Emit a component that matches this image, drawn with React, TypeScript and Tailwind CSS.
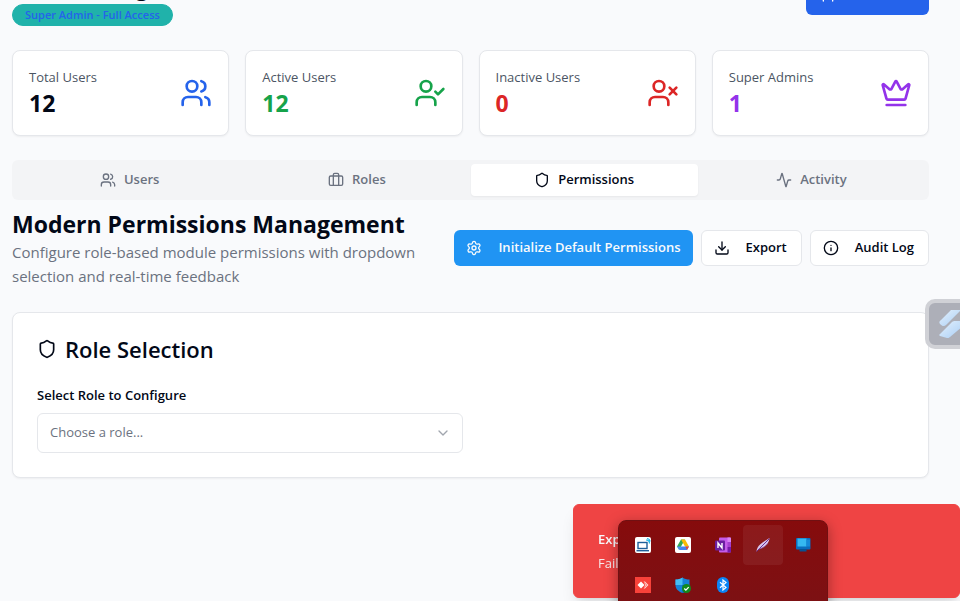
import {
  Activity,
  Briefcase,
  ChevronDown,
  Crown,
  Download,
  Info,
  Settings,
  Shield,
  UserCheck,
  UserPlus,
  Users,
  UserX,
} from "lucide-react";
import type { LucideIcon } from "lucide-react";
import type { ReactNode } from "react";

type Stat = { label: string; value: number; icon: LucideIcon; color: string };

const stats: Stat[] = [
  { label: "Total Users", value: 12, icon: Users, color: "text-[#2563eb]" },
  { label: "Active Users", value: 12, icon: UserCheck, color: "text-[#16a34a]" },
  { label: "Inactive Users", value: 0, icon: UserX, color: "text-[#dc2626]" },
  { label: "Super Admins", value: 1, icon: Crown, color: "text-[#9333ea]" },
];

const tabs: { label: string; icon: LucideIcon }[] = [
  { label: "Users", icon: Users },
  { label: "Roles", icon: Briefcase },
  { label: "Permissions", icon: Shield },
  { label: "Activity", icon: Activity },
];

function StatCard({ label, value, icon: Icon, color }: Stat) {
  return (
    <div className="flex items-center justify-between rounded-lg border border-[#e5e7eb] bg-white p-4 shadow-xs">
      <div>
        <p className="text-[13px] leading-5 text-[#4b5563]">{label}</p>
        <p className={`text-[23px] leading-8 font-bold ${label === "Total Users" ? "text-[#020817]" : color}`}>{value}</p>
      </div>
      <Icon className={`size-8 ${color}`} />
    </div>
  );
}

function OutlineButton({ icon: Icon, children }: { icon: LucideIcon; children: ReactNode }) {
  return (
    <button className="flex h-9 min-w-[100px] items-center gap-4 rounded-md border border-[#e5e7eb] bg-white pr-3.5 pl-3 text-[13px] font-semibold whitespace-nowrap">
      <Icon className="size-4" />
      {children}
    </button>
  );
}

function TrayIcons() {
  const items: { name: string; art: ReactNode }[] = [
    {
      name: "Remote display",
      art: (
        <>
          <rect width="16" height="16" rx="2" fill="#fff" />
          <rect x="3" y="5.5" width="9" height="6" fill="none" stroke="#1f5f99" strokeWidth="1.4" />
          <path d="M1.5 13.7h12.5" stroke="#1f5f99" strokeWidth="1.4" />
          <path d="M11 3c2 0 3.500 1.500 3.500 3.500M12 1.500c2 .3 3 1.500 3 3" fill="none" stroke="#19b5e8" strokeWidth="1.200" />
        </>
      ),
    },
    {
      name: "Drive",
      art: (
        <>
          <rect width="16" height="16" rx="2" fill="#fff" />
          <path d="M6 2.500h4L8 6 4.300 12.500 2 9.500z" fill="#34a853" />
          <path d="M6 2.500h4L14 9.500h-4z" fill="#fbbc04" />
          <path d="M5.700 9.500H14L12 13H4z" fill="#4285f4" />
          <path d="M10.500 9.500H14L12 13z" fill="#ea4335" />
          <path d="M2 9.500h3.700L4 13z" fill="#4f8df5" />
        </>
      ),
    },
    {
      name: "Notes",
      art: (
        <>
          <rect x="4" y="0.500" width="12" height="15" rx="1" fill="#c45be8" />
          <path d="M12.500 .5H15a1 1 0 0 1 1 1V5h-3.500z" fill="#d982f2" />
          <path d="M12.500 5H16v5h-3.500z" fill="#a640cf" />
          <path d="M12.500 10H16v4.500a1 1 0 0 1-1 1h-2.500z" fill="#7719aa" />
          <rect x="0" y="3.500" width="10" height="10" rx="1" fill="#6b1fa0" />
          <path d="M3 11V6l4 5V6" fill="none" stroke="#fff" strokeWidth="1.400" />
        </>
      ),
    },
    {
      name: "Feather",
      art: (
        <>
          <path d="M1.500 14.500C2 8.500 7 5.500 14.500 1c-.3 5-4 9-10.500 11z" fill="#d9c6ec" />
          <path d="M1.500 14.500 14.500 1.500" stroke="#6d3199" strokeWidth="1" />
          <path d="M4 12c4-1 7-3 9-6" fill="none" stroke="#8a5bb0" strokeWidth=".7" />
        </>
      ),
    },
    {
      name: "Desktop",
      art: (
        <>
          <rect x="1" y="1" width="14.500" height="11.500" rx="1" fill="#0a6cbd" />
          <rect x="2.500" y="1.500" width="9" height="8" fill="#35b8f1" />
          <path d="M11.500 2.500h3.500v7h-3.500z" fill="#1488d8" />
          <path d="M4.500 12h7v2.500h-7z" fill="#075393" />
        </>
      ),
    },
    {
      name: "Remote control",
      art: (
        <>
          <rect width="16" height="16" fill="#f8423a" />
          <path d="M6 4.500 9.500 8 6 11.500 2.500 8z" fill="#fff" />
          <path d="M8.500 4.500h1.500L13.500 8 10 11.500H8.500L12 8z" fill="#ffd3cf" />
          <path d="M9 5.500 11.500 8 9 10.500 10.300 8z" fill="#ffd3cf" />
        </>
      ),
    },
    {
      name: "Security",
      art: (
        <>
          <path d="M7.500 .5c2 1.500 4.500 2 7 2V8c0 4-3 6.500-7 8-4-1.500-7-4-7-8V2.500c2.500 0 5-.5 7-2z" fill="#1683d8" />
          <path d="M7.500 .5V8h-7V2.500c2.500 0 5-.5 7-2z" fill="#45bdf3" />
          <path d="M7.500 8h7c0 4-3 6.500-7 8z" fill="#0b5fae" />
          <circle cx="11.500" cy="11.500" r="4.500" fill="#118a1d" />
          <path d="m9.300 11.500 1.600 1.600 2.800-3" fill="none" stroke="#fff" strokeWidth="1.300" />
        </>
      ),
    },
    {
      name: "Bluetooth",
      art: (
        <>
          <rect x="2" y="0" width="12" height="16" rx="6" fill="#0a84f5" />
          <path d="m5 5.300 6 5.200L8 13V3l3 2.500-6 5.200" fill="none" stroke="#fff" strokeWidth="1.200" />
        </>
      ),
    },
  ];

  return (
    <div className="fixed -bottom-[13px] left-[618px] grid grid-cols-5 rounded-lg border border-[#701012] bg-linear-to-b from-[#860b0c] to-[#7b1114] p-1 pb-2 shadow-[0_4px_14px_rgba(0,0,0,0.35)]">
      {items.map((item) => (
        <button
          key={item.name}
          aria-label={item.name}
          className={`flex size-10 items-center justify-center rounded ${item.name === "Feather" ? "bg-white/6" : ""}`}
        >
          <svg viewBox="0 0 16 16" className="size-4">
            {item.art}
          </svg>
        </button>
      ))}
    </div>
  );
}

export default function App() {
  return (
    <div className="h-screen overflow-hidden bg-[#f9fafc] pr-[31px] pl-3 font-['Open_Sans','Noto_Sans',sans-serif] text-[#020817]">
      <header className="-mt-[30px] flex items-center justify-between">
        <div className="flex flex-col items-start gap-0.5">
          <h1 className="text-[23px] leading-8 font-bold">User Management</h1>
          <span className="rounded-full border border-[#20b2aa] bg-[#20b2aa] px-3 text-[11px] leading-5 font-semibold text-[#2563eb]">
            Super Admin - Full Access
          </span>
        </div>
        <button className="mb-1.5 flex h-10 min-w-[123px] items-center gap-4 rounded-md bg-[#2563eb] px-4 text-[13px] font-semibold whitespace-nowrap text-white">
          <UserPlus className="size-4" />
          Add User
        </button>
      </header>

      <section className="mt-6 grid grid-cols-4 gap-4">
        {stats.map((stat) => (
          <StatCard key={stat.label} {...stat} />
        ))}
      </section>

      <nav role="tablist" className="mt-6 grid grid-cols-4 rounded-md bg-[#f3f4f6] p-1">
        {tabs.map(({ label, icon: Icon }) => {
          const active = label === "Permissions";
          return (
            <button
              key={label}
              role="tab"
              aria-selected={active}
              className={`flex h-8 items-center justify-center gap-2 rounded-sm text-[13px] font-semibold ${
                active ? "bg-white shadow-xs" : "text-[#6b7280]"
              }`}
            >
              <Icon className="size-4" />
              {label}
            </button>
          );
        })}
      </nav>

      <main className="mt-2">
        <div className="flex items-center justify-between gap-4">
          <div>
            <h2 className="text-[23px] leading-8 font-bold whitespace-nowrap">Modern Permissions Management</h2>
            <p className="text-[15px] leading-6 text-[#6b7280]">
              Configure role-based module permissions with dropdown selection and real-time feedback
            </p>
          </div>
          <div className="flex shrink-0 gap-2">
            <button className="flex h-9 items-center gap-4 rounded-md bg-[#2094f3] px-3 text-[13px] font-semibold whitespace-nowrap text-[#f8fafc]">
              <Settings className="size-4" />
              Initialize Default Permissions
            </button>
            <OutlineButton icon={Download}>Export</OutlineButton>
            <OutlineButton icon={Info}>Audit Log</OutlineButton>
          </div>
        </div>

        <section className="mt-6 rounded-lg border border-[#e5e7eb] bg-white p-6 shadow-xs">
          <h3 className="flex items-center gap-2 text-[22px] leading-6 font-semibold">
            <Shield className="size-5" />
            Role Selection
          </h3>
          <div className="mt-6 grid grid-cols-2 gap-4">
            <div>
              <label htmlFor="role" className="block text-[13px] leading-5 font-semibold">
                Select Role to Configure
              </label>
              <div className="relative mt-2">
                <select
                  id="role"
                  defaultValue=""
                  className="h-10 w-full appearance-none rounded-md border border-[#e5e7eb] bg-white px-3 text-[13px] text-[#6b7280]"
                >
                  <option value="">Choose a role...</option>
                </select>
                <ChevronDown className="pointer-events-none absolute top-3 right-3 size-4 text-[#a1a6ae]" />
              </div>
            </div>
          </div>
        </section>
      </main>

      <button
        aria-label="Open assistant"
        className="fixed top-[299px] -right-4 flex h-[50px] w-[51px] items-center rounded-[10px] border-4 border-[#d0d1d6] bg-[#adafb8] pl-2.5"
      >
        <svg viewBox="0 0 24 30" className="h-[30px] w-6 shrink-0">
          <defs>
            <linearGradient id="ribbon" x1="0" y1="0" x2="1" y2="1">
              <stop offset="0" stopColor="#e4f1fd" />
              <stop offset="1" stopColor="#a9cef5" />
            </linearGradient>
          </defs>
          <path d="M12 1h10L7 16c-2 2-4 1-6-1-1-1-1-3 1-4z" fill="url(#ribbon)" />
          <path d="M13 13c1-1 2-1 3-1h8v5L11 28c-1 1-2 1-3 1l-7-2c-1-1-1-1 0-2z" fill="url(#ribbon)" />
        </svg>
      </button>

      <div
        role="alert"
        className="fixed right-0 bottom-[3px] w-[387px] rounded-md border border-[#ef4444] bg-[#ef4444] p-6 text-[13px] leading-5 text-[#f8fafc] shadow-lg"
      >
        <p className="font-semibold">Export Failed</p>
        <p className="mt-1 opacity-90">Failed to export</p>
      </div>
      <TrayIcons />
    </div>
  );
}
